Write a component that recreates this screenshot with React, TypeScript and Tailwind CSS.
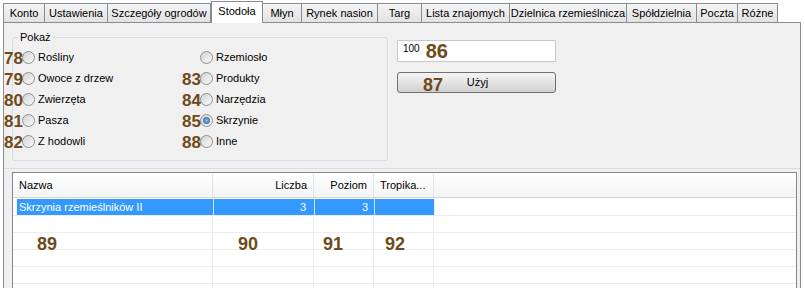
import type { ReactNode } from "react";

const tabs = [
  { label: "Konto", w: "w-[42px]" },
  { label: "Ustawienia", w: "w-[63px]" },
  { label: "Szczegóły ogrodów", w: "w-[103px]" },
  { label: "Stodoła", w: "w-[52px]", active: true },
  { label: "Młyn", w: "w-[39px]" },
  { label: "Rynek nasion", w: "w-[76px]" },
  { label: "Targ", w: "w-[44px]" },
  { label: "Lista znajomych", w: "w-[88px]" },
  { label: "Dzielnica rzemieślnicza", w: "w-[117px]" },
  { label: "Spółdzielnia", w: "w-[70px]" },
  { label: "Poczta", w: "w-[41px]" },
  { label: "Różne", w: "w-[40px]" },
];

const leftRadios = [
  { label: "Rośliny", tag: "78" },
  { label: "Owoce z drzew", tag: "79" },
  { label: "Zwierzęta", tag: "80" },
  { label: "Pasza", tag: "81" },
  { label: "Z hodowli", tag: "82" },
];

const rightRadios = [
  { label: "Rzemiosło" },
  { label: "Produkty", tag: "83" },
  { label: "Narzędzia", tag: "84" },
  { label: "Skrzynie", tag: "85", checked: true },
  { label: "Inne", tag: "88" },
];

// brown overlay numbers drawn on top of the screenshot
function Tag({ children, className = "" }: { children: ReactNode; className?: string }) {
  return (
    <span
      className={`pointer-events-none font-['Liberation_Sans',Arial,sans-serif] font-bold leading-none text-[#6f4a1a] ${className}`}
    >
      {children}
    </span>
  );
}

function Radio({ label, tag, checked }: { label: string; tag?: string; checked?: boolean }) {
  return (
    <div className="flex h-[21px] items-center gap-[3px]">
      <span className="relative flex h-[13px] w-[13px] items-center justify-center rounded-full border border-[#8e8f8f] bg-linear-to-br from-[#d2d2d2] to-[#fbfbfb]">
        {checked && (
          <span className="h-[7px] w-[7px] rounded-full bg-radial from-[#8cc0f0] to-[#1b4f8e]" />
        )}
        {tag && (
          <Tag className="absolute right-full top-1/2 -translate-y-1/2 text-[17px]">
            {tag}
          </Tag>
        )}
      </span>
      <span>{label}</span>
    </div>
  );
}

export default function App() {
  return (
    <div className="h-[288px] w-[805px] overflow-hidden bg-white font-['Liberation_Sans',Arial,sans-serif] text-[11px] text-black">
      {/* tab strip */}
      <div className="flex h-[22px] items-end pl-[3px]">
        {tabs.map((t, i) =>
          t.active ? (
            <div
              key={t.label}
              className={`${t.w} relative z-10 -mb-px flex h-[22px] items-center justify-center border-x border-t border-[#898c95] bg-white pb-[3px]`}
            >
              {t.label}
            </div>
          ) : (
            <div
              key={t.label}
              className={`${t.w} flex h-[19px] items-center justify-center border-t border-r border-[#898c95] bg-linear-to-b from-[#f4f4f4] to-[#e2e2e2] ${i === 0 ? "border-l" : ""}`}
            >
              {t.label}
            </div>
          )
        )}
      </div>

      {/* tab page */}
      <div className="ml-[3px] mr-[4px] h-[266px] border-x border-t border-[#898c95] bg-[#f0f0f0]">
        <div className="flex h-[146px] gap-[9px] border-b border-[#dcdcdc] pl-[8px] pt-[8px]">
          <fieldset className="h-[130px] w-[376px] rounded-[3px] border border-[#d5dfe5]">
            <legend className="ml-[5px] px-[2px] leading-[13px]">Pokaż</legend>
            <div className="grid grid-cols-[178px_1fr] pl-[9px] pt-[3px]">
              <div>
                {leftRadios.map((r) => (
                  <Radio key={r.label} {...r} />
                ))}
              </div>
              <div>
                {rightRadios.map((r) => (
                  <Radio key={r.label} {...r} />
                ))}
              </div>
            </div>
          </fieldset>

          <div className="flex w-[159px] flex-col gap-[10px] pt-[9px]">
            <div className="flex h-[22px] items-center gap-[6px] border border-[#c9c9c9] bg-white pl-[5px]">
              <span className="-mt-[5px] text-[10px]">100</span>
              <Tag className="text-[20px]">86</Tag>
            </div>
            <button className="relative flex h-[21px] items-center justify-center rounded-[3px] border border-[#707070] bg-linear-to-b from-[#f4f4f4] via-[#e4e4e4] to-[#d0d0d0] pl-[2px]">
              <Tag className="absolute left-[25px] top-[3px] text-[18px]">87</Tag>
              Użyj
            </button>
          </div>
        </div>

        {/* list view */}
        <div className="ml-[8px] mr-[3px] mt-[3px] h-[120px] border border-[#828790] bg-white pt-px">
          <div className="grid h-[24px] grid-cols-[200px_101px_60px_60px_1fr] border-b border-[#d5d5d5] bg-linear-to-b from-white to-[#f3f4f6]">
            <div className="flex items-center border-r border-[#e3e3e3] pl-[6px]">Nazwa</div>
            <div className="flex items-center justify-end border-r border-[#e3e3e3] pr-[6px]">Liczba</div>
            <div className="flex items-center justify-end border-r border-[#e3e3e3] pr-[6px]">Poziom</div>
            <div className="flex items-center border-r border-[#e3e3e3] pl-[6px]">Tropika...</div>
            <div />
          </div>

          <div className="grid h-[18px] grid-cols-[200px_101px_60px_60px_1fr] border-b border-[#ededed] pt-px text-white">
            <div className="pl-[4px]">
              <div className="flex h-[16px] items-center bg-[#3399ff] pl-[2px]">Skrzynia rzemieślników II</div>
            </div>
            <div className="flex h-[16px] items-center justify-end border-l border-[#cfe6ff] bg-[#3399ff] pr-[8px]">3</div>
            <div className="flex h-[16px] items-center justify-end border-l border-[#cfe6ff] bg-[#3399ff] pr-[6px]">3</div>
            <div className="h-[16px] border-l border-[#cfe6ff] bg-[#3399ff]" />
            <div className="h-[16px] border-l border-[#ededed]" />
          </div>

          {[0, 1, 2, 3, 4].map((r) => (
            <div
              key={r}
              className="grid h-[17px] grid-cols-[200px_101px_60px_60px_1fr] border-b border-[#ededed]"
            >
              <div className="relative border-r border-[#ededed]">
                {r === 1 && <Tag className="absolute left-[24px] top-[2px] text-[18px]">89</Tag>}
              </div>
              <div className="relative border-r border-[#ededed]">
                {r === 1 && <Tag className="absolute left-[25px] top-[2px] text-[18px]">90</Tag>}
              </div>
              <div className="relative border-r border-[#ededed]">
                {r === 1 && <Tag className="absolute left-[9px] top-[2px] text-[18px]">91</Tag>}
              </div>
              <div className="relative border-r border-[#ededed]">
                {r === 1 && <Tag className="absolute left-[11px] top-[2px] text-[18px]">92</Tag>}
              </div>
              <div />
            </div>
          ))}
        </div>
      </div>
    </div>
  );
}
